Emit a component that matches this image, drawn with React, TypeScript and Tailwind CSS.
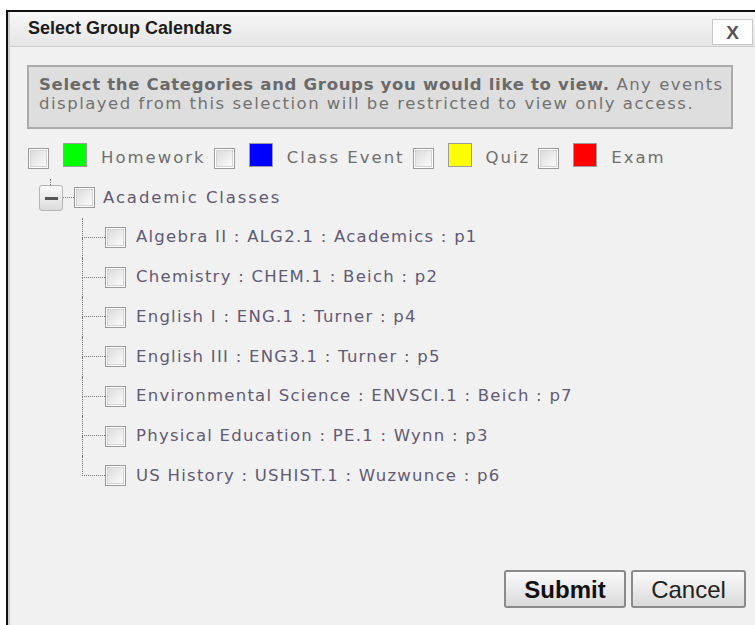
import React from "react";

const verdana = { fontFamily: '"DejaVu Sans", Verdana, sans-serif' };

function Check() {
  return (
    <span className="inline-flex h-[21px] w-[21px] shrink-0 items-center justify-center border border-[#9a9a9a] bg-white">
      <span className="block h-[17px] w-[17px] border border-[#d4d4d4] bg-gradient-to-br from-[#dcdcdc] to-[#fbfbfb]" />
    </span>
  );
}

function Swatch({ color }: { color: string }) {
  return (
    <span className="inline-flex h-[24px] w-[24px] shrink-0 items-center justify-center border border-[#9c9c9c]">
      <span className="block h-[22px] w-[22px]" style={{ background: color }} />
    </span>
  );
}

const categories = [
  { name: "Homework", color: "#00ff00" },
  { name: "Class Event", color: "#0000ff" },
  { name: "Quiz", color: "#ffff00" },
  { name: "Exam", color: "#ff0000" },
];

const groups = [
  "Algebra II : ALG2.1 : Academics : p1",
  "Chemistry : CHEM.1 : Beich : p2",
  "English I : ENG.1 : Turner : p4",
  "English III : ENG3.1 : Turner : p5",
  "Environmental Science : ENVSCI.1 : Beich : p7",
  "Physical Education : PE.1 : Wynn : p3",
  "US History : USHIST.1 : Wuzwunce : p6",
];

export default function App() {
  return (
    <div className="h-[625px] w-[755px] overflow-hidden bg-white pl-[6px] pt-[10px]">
      <div className="flex h-[620px] w-[760px] flex-col border-l-2 border-t-2 border-[#111]">
        <div className="flex flex-1 flex-col border-l-2 border-[#cfcfcf] bg-[#f1f1f1]">
          {/* title bar */}
          <div className="flex h-[35px] items-start border-b border-[#cdcdcd] bg-gradient-to-b from-[#f8f8f8] to-[#e5e5e5] pl-[18px]">
            <span
              className="mt-[6px] text-[18px] font-bold leading-[20px] text-[#1c1c1c]"
              style={{ fontFamily: '"Liberation Sans", Arial, sans-serif' }}
            >
              Select Group Calendars
            </span>
            <button
              className="ml-auto mr-[13px] mt-[7px] flex h-[26px] w-[41px] items-center justify-center border border-[#c9c9c9] bg-white text-[19px] font-bold leading-none text-[#555]"
              style={{ fontFamily: '"Liberation Sans", Arial, sans-serif' }}
            >
              X
            </button>
          </div>

          <div className="flex flex-1 flex-col" style={verdana}>
            {/* notice */}
            <div className="ml-[17px] mt-[18px] h-[64px] w-[706px] border-2 border-[#ababab] bg-[#dedede] pl-[10px] pt-[8px] text-[16.5px] leading-[19px] tracking-[1.5px] text-[#727272]">
              <span className="font-bold tracking-[0.7px] text-[#6a6a6a]">
                Select the Categories and Groups you would like to view.
              </span>{" "}
              Any events displayed from this selection will be restricted to view only access.
            </div>

            {/* categories */}
            <div className="ml-[18px] mt-[16px] flex h-[26px] items-center text-[16.5px] tracking-[2px] text-[#6e6e6e]">
              {categories.map((c) => (
                <div key={c.name} className="mr-[8px] flex items-center">
                  <Check />
                  <span className="ml-[14px]">
                    <Swatch color={c.color} />
                  </span>
                  <span className="ml-[14px]">{c.name}</span>
                </div>
              ))}
            </div>

            {/* group tree */}
            <div className="ml-[29px] mt-[8px] text-[16.5px] tracking-[1.25px] text-[#625a72]">
              <div className="ml-[11px] h-[6px] w-0 border-l border-dotted border-[#777]" />
              <div className="flex h-[33px] items-start">
                <span className="flex h-[26px] w-[24px] items-center justify-center rounded-[3px] border border-[#b4b4b4] bg-gradient-to-b from-[#fafafa] to-[#dcdcdc]">
                  <span className="block h-[3px] w-[13px] bg-[#555]" />
                </span>
                <span className="mt-[12px] w-[11px] border-t border-dotted border-[#777]" />
                <span className="mt-[2px]">
                  <Check />
                </span>
                <span className="ml-[8px] mt-[3px] leading-[20px] tracking-[1.9px]">Academic Classes</span>
              </div>
              <div className="ml-[43px]">
                {groups.map((g, i) => {
                  const last = i === groups.length - 1;
                  return (
                    <div key={g} className="flex h-[39.7px] items-stretch">
                      <div className="flex w-[23px] shrink-0 flex-col">
                        <div className="h-1/2 border-b border-l border-dotted border-[#777]" />
                        <div className={"h-1/2 " + (last ? "" : "border-l border-dotted border-[#777]")} />
                      </div>
                      <div className="flex items-center">
                        <Check />
                        <span className="ml-[10px]">{g}</span>
                      </div>
                    </div>
                  );
                })}
              </div>
            </div>

            {/* actions */}
            <div
              className="mt-auto flex justify-end gap-[5px] pb-[22px] pr-[20px]"
              style={{ fontFamily: '"Liberation Sans", Arial, sans-serif' }}
            >
              <button className="h-[38px] w-[122px] rounded-[3px] border-2 border-[#8a8a8a] bg-gradient-to-b from-[#fbfbfb] to-[#dadada] text-[24px] font-bold text-[#111]">
                Submit
              </button>
              <button className="h-[38px] w-[115px] rounded-[3px] border-2 border-[#8a8a8a] bg-gradient-to-b from-[#fbfbfb] to-[#dadada] text-[24px] text-[#222]">
                Cancel
              </button>
            </div>
          </div>
        </div>
      </div>
    </div>
  );
}
